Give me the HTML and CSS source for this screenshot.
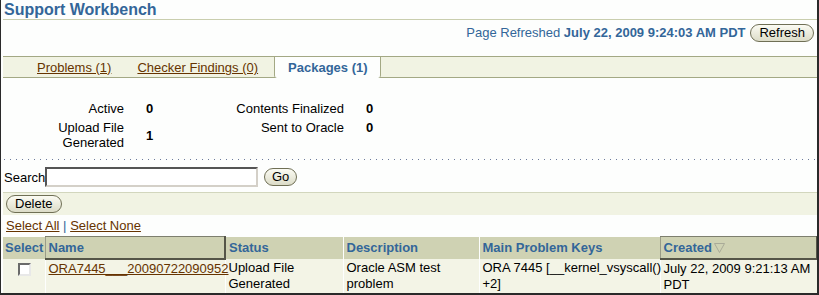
FILE: index.html
```html
<!DOCTYPE html>
<html lang="en">
<head>
    <meta charset="UTF-8">
    <title>Support Workbench</title>
    <link rel="stylesheet" href="styles.css">
</head>
<body>
    <div class="frame">
        <div class="page-title">Support Workbench</div>

        <div class="refresh-row">
            <span class="refreshed">Page Refreshed <b>July 22, 2009 9:24:03 AM PDT</b></span>
            <button class="btn">Refresh</button>
        </div>

        <div class="tabbar">
            <a class="tab" href="#">Problems (1)</a>
            <a class="tab" href="#">Checker Findings (0)</a>
            <span class="tab active">Packages (1)</span>
        </div>

        <div class="summary">
            <span class="lbl">Active</span>
            <span class="val">0</span>
            <span class="lbl">Contents Finalized</span>
            <span class="val">0</span>
            <span class="lbl">Upload File<br>Generated</span>
            <span class="val mid">1</span>
            <span class="lbl">Sent to Oracle</span>
            <span class="val">0</span>
        </div>

        <div class="dots"></div>

        <div class="search-row">
            <label class="search-label">Search</label>
            <input class="search-input" type="text">
            <button class="btn btn-go">Go</button>
        </div>

        <div class="action-band">
            <button class="btn">Delete</button>
        </div>

        <div class="select-links">
            <a href="#">Select All</a> <span class="sep">|</span> <a href="#">Select None</a>
        </div>

        <table class="results">
            <colgroup>
                <col style="width:42px">
                <col style="width:180px">
                <col style="width:118px">
                <col style="width:136px">
                <col style="width:181px">
                <col style="width:157px">
            </colgroup>
            <thead>
                <tr>
                    <th>Select</th>
                    <th class="sorted">Name</th>
                    <th>Status</th>
                    <th>Description</th>
                    <th>Main Problem Keys</th>
                    <th class="sorted">Created<svg class="sort-icon" width="11" height="10" viewBox="0 0 11 10"><polygon points="0.5,0.5 10.5,0.5 5.5,9.5" fill="none" stroke="#a9ab98"/></svg></th>
                </tr>
            </thead>
            <tbody>
                <tr>
                    <td class="check-cell"><span class="checkbox"></span></td>
                    <td><a href="#">ORA7445___20090722090952</a></td>
                    <td>Upload File Generated</td>
                    <td>Oracle ASM test problem</td>
                    <td><span class="nowrap">ORA 7445 [__kernel_vsyscall()</span><wbr>+2]</td>
                    <td>July 22, 2009 9:21:13 AM PDT</td>
                </tr>
            </tbody>
        </table>
    </div>
</body>
</html>
```

FILE: styles.css
```css
body {
    margin: 0;
    padding: 0;
    background-color: #fdfefd;
    font-family: "Liberation Sans", Arial, sans-serif;
    font-size: 13px;
    color: #000;
}

.frame {
    width: 819px;
    height: 295px;
    box-sizing: border-box;
    border-left: 1px solid #2a2a2a;
    border-right: 2px solid #2a2a2a;
    border-bottom: 2px solid #2a2a2a;
    padding-left: 2px;
    overflow: hidden;
}

a {
    color: #663300;
    text-decoration: underline;
}

.page-title {
    height: 19px;
    line-height: 20px;
    padding-left: 1px;
    font-size: 16px;
    font-weight: bold;
    color: #336699;
    border-bottom: 1px solid #c9ceae;
}

.refresh-row {
    display: flex;
    justify-content: flex-end;
    align-items: center;
    gap: 5px;
    height: 19px;
    margin-top: 3px;
    padding-right: 3px;
}

.refreshed {
    color: #336699;
}

.btn {
    font-family: "Liberation Sans", Arial, sans-serif;
    font-size: 13px;
    color: #000;
    height: 18px;
    line-height: 16px;
    padding: 0 8px;
    border: 1px solid #6f6f55;
    border-radius: 9px;
    background: linear-gradient(#fbfbf3, #dcdcc8);
    cursor: pointer;
}

.tabbar {
    display: flex;
    height: 20px;
    margin-top: 14px;
    padding-left: 21px;
    background-color: #f1f3e3;
    border-top: 1px solid #a3a884;
    border-bottom: 1px solid #a3a884;
}

.tab {
    line-height: 21px;
    padding: 0 13px;
}

.tab.active {
    margin-left: 3px;
    margin-bottom: -1px;
    padding: 0 12px 0 13px;
    background-color: #fdfefd;
    border-left: 1px solid #a3a884;
    border-right: 1px solid #a3a884;
    border-radius: 0 0 3px 3px;
    color: #336699;
    font-weight: bold;
}

.summary {
    display: grid;
    grid-template-columns: 121px 60px 160px 40px;
    margin-top: 21px;
    line-height: 15px;
}

.summary .lbl,
.summary .val {
    padding: 2px 0;
}

.summary .lbl {
    text-align: right;
}

.summary .val {
    padding-left: 22px;
    font-weight: bold;
}

.summary .val.mid {
    align-self: center;
}

.dots {
    height: 1px;
    margin-top: 7px;
    background: repeating-linear-gradient(to right, #6d7b9c 0 1px, transparent 1px 6px);
    background-position: 1px 0;
}

.search-row {
    display: flex;
    align-items: center;
    margin-top: 7px;
    height: 20px;
    padding-left: 1px;
}

.search-label {
    width: 41px;
}

.search-input {
    width: 213px;
    height: 20px;
    box-sizing: border-box;
    margin: 0;
    border: 2px solid;
    border-color: #555 #d4d0c8 #d4d0c8 #555;
    background: #fff;
}

.btn-go {
    margin-left: 6px;
    padding: 0 7px;
}

.action-band {
    display: flex;
    align-items: center;
    height: 22px;
    margin-top: 5px;
    padding-left: 3px;
    background-color: #f1f3e3;
    border-top: 1px solid #d2d6bd;
}

.select-links {
    height: 20px;
    line-height: 22px;
    padding-left: 3px;
}

.select-links .sep {
    color: #336699;
}

.results {
    width: 814px;
    table-layout: fixed;
    border-collapse: collapse;
    margin-top: 1px;
}

.results th {
    height: 21px;
    padding: 0 3px;
    background-color: #cfd2b3;
    color: #336699;
    font-weight: bold;
    text-align: left;
    border-left: 1px solid #fdfefd;
    white-space: nowrap;
    overflow: hidden;
}

.results th:first-child {
    border-left: none;
    padding: 0 1px 0 2px;
}

.results th.sorted {
    border-top: 1px solid #7d7f6e;
    border-left: 1px solid #9a9c88;
    border-right: 2px solid #555548;
    border-bottom: 2px solid #555548;
}

.sort-icon {
    margin-left: 2px;
    vertical-align: -1px;
}

.results td {
    height: 32px;
    padding: 1px 1px 0 3px;
    vertical-align: top;
    line-height: 16px;
    background-color: #f3f4e6;
    border-left: 1px solid #fdfefd;
}

.results td:first-child {
    border-left: none;
}

.nowrap {
    white-space: nowrap;
}

.check-cell {
    text-align: center;
}

.checkbox {
    display: inline-block;
    width: 13px;
    height: 13px;
    margin-top: 3px;
    box-sizing: border-box;
    border: 2px solid;
    border-color: #6a6a6a #e8e8e8 #e8e8e8 #6a6a6a;
    background: #fff;
}
```
